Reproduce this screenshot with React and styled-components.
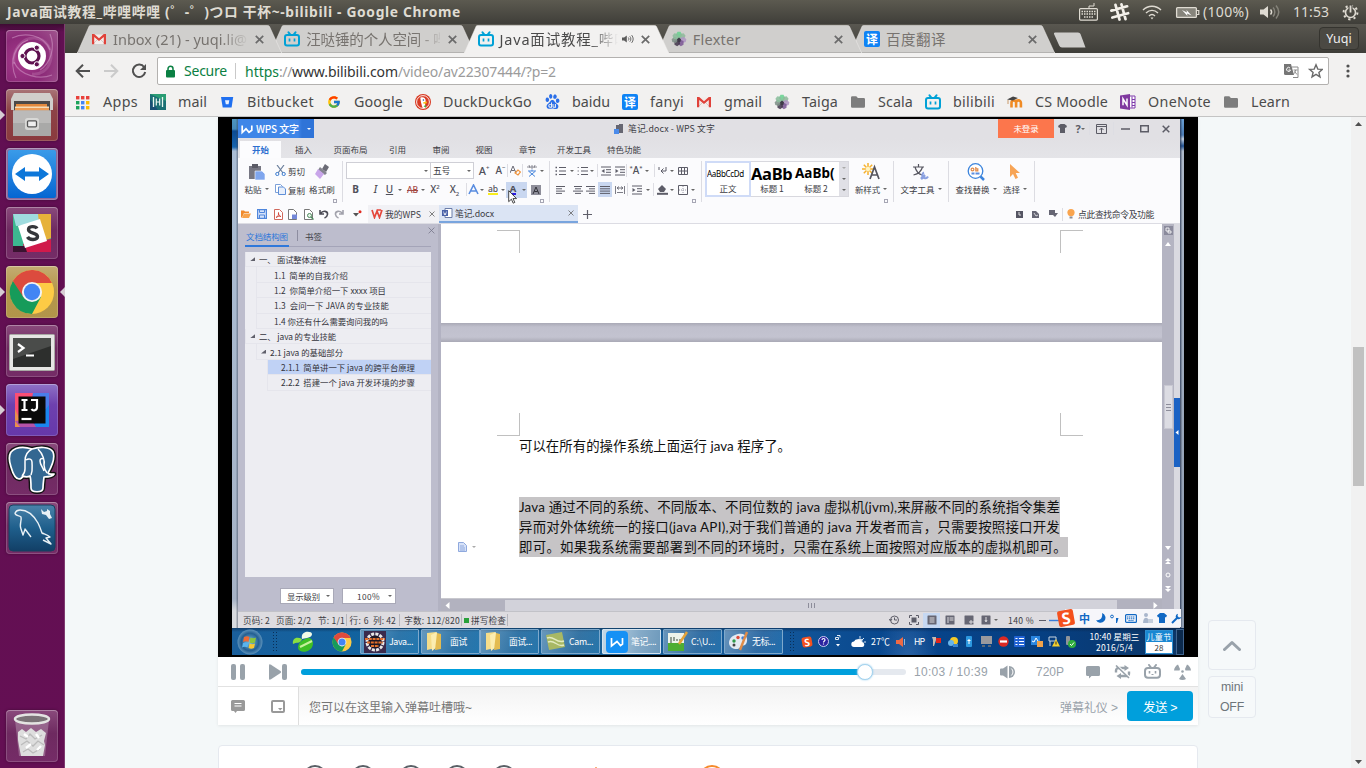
import React, { useLayoutEffect, useRef } from 'react';
import styled, { createGlobalStyle, css } from 'styled-components';
import { FcGoogle } from 'react-icons/fc';
import { SiBaidu } from 'react-icons/si';

const UI = '"Noto Sans", "Noto Sans CJK SC", sans-serif';
const CJK = '"Noto Sans CJK SC", sans-serif';
const WEB = '"Liberation Sans", "Noto Sans CJK SC", sans-serif';

const Global = createGlobalStyle`
  *, *::before, *::after { box-sizing: border-box; }
  body { margin: 0; overflow: hidden; font-family: ${UI}; }
  svg { display: block; flex: none; }
`;

/* ---------- text that keeps a given line width ---------- */
const FitSpan = styled.span`
  display: inline-block;
  flex: none;
  white-space: pre;
`;
function Fit({ w, children }) {
  const ref = useRef(null);
  useLayoutEffect(() => {
    const el = ref.current;
    el.style.letterSpacing = '0px';
    const natural = el.getBoundingClientRect().width;
    el.style.letterSpacing = (w - natural) / Array.from(children).length + 'px';
  }, [w, children]);
  return <FitSpan ref={ref}>{children}</FitSpan>;
}

const Svg = ({ w = 16, h = w, vb = `0 0 ${w} ${h}`, children, ...p }) => (
  <svg width={w} height={h} viewBox={vb} fill="none" {...p}>{children}</svg>
);

/* ---------- desktop shell ---------- */
const Desktop = styled.div`
  width: 1366px; height: 768px; display: flex; flex-direction: column; overflow: hidden; background: #f4f8f9;
`;
const Panel = styled.header`
  height: 24px; flex: none; display: flex; align-items: center; padding: 0 5px 0 7px;
  background: linear-gradient(#5c5a50, #3f3e39); color: #dfdbd2; font-size: 14px; line-height: 24px;
  justify-content: space-between;
`;
const PanelTitle = styled.div` font-weight: 700; font-size: 13.8px; `;
const Indicators = styled.div` display: flex; align-items: center; `;
const Ind = styled.div` width: ${p => p.$w}px; display: flex; justify-content: ${p => p.$start ? 'flex-start' : 'center'}; `;
const Body = styled.div` flex: 1; display: flex; min-height: 0; `;

const Launcher = styled.nav`
  width: 65px; flex: none; display: flex; flex-direction: column; gap: 7px; padding: 6px 0 6px 6px;
  background: linear-gradient(#3e0b33, #610f52 8px, #640f53); border-right: 1px solid #7f3a70;
`;
const Tile = styled.div`
  position: relative; width: 52px; height: 52px; flex: none; border-radius: 4px; display: flex; align-items: center; justify-content: center;
  background: ${p => p.$bg || 'linear-gradient(#8a4a7c, #6e2a60 45%, #752c67)'};
  box-shadow: inset 0 0 0 1px rgba(255,255,255,.17), inset 0 1px 0 rgba(255,255,255,.2), 0 0 3px rgba(0,0,0,.35);
  ${p => p.$last && css`margin-top: auto;`}
`;
const Pip = styled.i`
  position: absolute; top: 21px; width: 0; height: 0; border: 5px solid transparent;
  ${p => p.$right ? css`right: -7px; border-right-color: #d6cdd4; border-left-width: 0;` : css`left: -6px; border-left-color: #d6cdd4; border-right-width: 0;`}
`;

/* ---------- browser chrome ---------- */
const Browser = styled.main` flex: 1; display: flex; flex-direction: column; min-width: 0; `;
const TabStrip = styled.div`
  height: 29px; flex: none; display: flex; padding: 1px 7px 0 12px; background: linear-gradient(#595750, #3f3e39);
`;
const Tab = styled.div`
  position: relative; width: 205px; margin-right: -11.75px; flex: none; z-index: ${p => p.$z};
  display: flex; align-items: center; padding: 0 17px 0 14px; height: 28px;
  font-size: 14.5px; color: ${p => p.$on ? '#4a4a4a' : '#77736f'};
`;
const TabShape = styled.svg` position: absolute; left: 0; top: 0; z-index: -1; `;
const TabTitle = styled.div`
  flex: 1; margin-left: 3px; padding-left: 3px; overflow: hidden; white-space: nowrap; line-height: 26px;
  ${p => p.$fade && css`mask-image: linear-gradient(90deg, #000 ${p.$fade - 25}px, transparent ${p.$fade + 3}px);`}
`;
const CloseSlot = styled.div` width: 12px; display: flex; justify-content: center; flex: none; margin-left: 6px; `;
const NewTab = styled.div` margin: 7px 0 0 10px; `;
const UserBtn = styled.div`
  margin: 2px 0 0 auto; width: 40px; height: 23px; border-radius: 4px; border: 1px solid #35342f;
  background: #4b4943; color: #eee; font-size: 12.5px; line-height: 21px; text-align: center;
`;
const Toolbar = styled.div`
  height: 35px; flex: none; display: flex; align-items: center; background: #f2f1f0; padding: 1px 16px 0 10px;
`;
const NavBtn = styled.div` width: 28px; display: flex; `;
const Omnibox = styled.div`
  margin-left: -2px; margin-right: 17px; flex: 1; height: 28px; background: #fff; border: 1px solid #b3b1af; border-radius: 2px;
  display: flex; align-items: center; font-size: 14px; padding: 0 5px 0 8px; color: #9b9b9b;
`;
const Secure = styled.span` color: #0b8043; margin-left: 9px; padding-right: 8px; border-right: 1px solid #c9c9c9; line-height: 16px; `;
const Url = styled.span` margin-left: 9px; display: flex; flex: 1; `;
const Part = styled.span` color: ${p => p.$c}; `;
const Bookmarks = styled.div`
  height: 29px; flex: none; display: flex; align-items: center; gap: 12px; padding: 0 0 1px 10px; background: #f2f1f0;
  border-bottom: 1px solid #c4c4c4; font-size: 14.3px; color: #4b4b4b;
`;
const Mark = styled.div` display: flex; align-items: center; gap: 12px; height: 28px; line-height: 26px; `;
const MarkIcon = styled.div` width: 16px; height: 16px; display: flex; align-items: center; justify-content: center; `;
const YiBadge = styled.div`
  width: 16px; height: 16px; border-radius: 2px; background: #0f83f5; color: #fff; font: 700 12px/15px ${CJK}; text-align: center;
`;

/* ---------- web page ---------- */
const Viewport = styled.div` flex: 1; display: flex; min-height: 0; background: #f4f8f9; `;
const Page = styled.div` flex: 1; display: flex; padding-left: 153px; min-width: 0; `;
const Column = styled.div` width: 980px; flex: none; `;
const Player = styled.section` background: #fff; box-shadow: 0 1px 3px rgba(0,0,0,.08); `;
const Video = styled.div` height: 540px; background: #000; padding: 2px 14px; display: flex; overflow: hidden; `;
const ScrollTrack = styled.div`
  width: 15px; background: #f1f1f1; flex: none; display: flex; flex-direction: column; align-items: center; padding: 5px 0 4px;
`;
const Thumb = styled.div` width: 11px; height: 139px; background: #c1c1c1; margin: 221px 0 auto; `;
const Side = styled.aside` margin: 503px 0 0 10px; display: flex; flex-direction: column; gap: 6px; font: 12.3px/20px ${WEB}; color: #6d757a; `;
const SideBtn = styled.div`
  width: 48px; height: ${p => p.$h}px; border: 1px solid #e5e9ef; border-radius: 4px; background: #f6f9fa;
  display: flex; flex-direction: column; align-items: center; justify-content: center;
`;
const Controls = styled.div`
  height: 30px; border-bottom: 1px solid #e2e2e2; display: flex; align-items: center; padding-left: 12px; color: #99a2aa; font: 12px ${WEB};
`;
const CtlSlot = styled.div` width: ${p => p.$w}px; display: flex; flex: none; `;
const Bar = styled.div` width: 605px; height: 6px; border-radius: 3px; background: #e5e9ef; display: flex; align-items: center; flex: none; margin-right: 8px; `;
const Played = styled.div` width: 564px; height: 6px; background: #009fdc; border-radius: 3px 0 0 3px; `;
const Knob = styled.div` width: 16px; height: 16px; border-radius: 50%; background: #fff; border: 1px solid #a5d3ee; box-shadow: 0 0 2px #8cc8ec; margin-left: -8px; `;
const SendRow = styled.div` height: 38px; display: flex; font: 12px ${WEB}; `;
const SendTools = styled.div` width: 81px; border-right: 1px solid #dedede; display: flex; align-items: center; gap: 26px; padding-left: 13px; `;
const SendInput = styled.div`
  flex: 1; display: flex; align-items: center; padding: 0 5px 0 10px; background: linear-gradient(#f3f3f3, #fff); color: #757575;
`;
const Etiquette = styled.span` margin-left: auto; color: #99a2aa; `;
const Send = styled.div` margin-left: 9px; width: 66px; height: 30px; border-radius: 4px; background: #009fdc; color: #fff; display: flex; align-items: center; justify-content: center; font-size: 12.5px; `;
const Card = styled.section`
  margin-top: 20px; height: 60px; border: 1px solid #e5e9ef; border-radius: 4px; background: #fff; padding: 19px 0 0 84px; display: flex;
`;
const Ring = styled.i`
  width: ${p => p.$d}px; height: ${p => p.$d}px; border-radius: 50%; border: 2px solid ${p => p.$c}; margin-right: ${p => p.$mr}px; flex: none;
`;
const Spark = styled.i` width: 2px; height: 4px; background: #f7b27a; margin: 2px 102px 0 79px; flex: none; `;

/* ---------- recorded desktop inside the video ---------- */
const Screen = styled.div` width: 952px; height: 536px; display: flex; flex-direction: column; font-family: ${CJK}; color: #3c3c44; font-size: 8.5px; overflow: hidden; `;
const Upper = styled.div` height: 509px; display: flex; `;
const DeskLeft = styled.div` width: 6px; background: linear-gradient(90deg, transparent 60%, rgba(60,70,90,.55)), linear-gradient(#4e95bd, #4489b8 10px, #0b4a92 12px, #1764ae 28px, #aabdd4 32px, #a7b3c6 480px, #d8dade 492px); `;
const DeskRight = styled.div` width: 4px; background: linear-gradient(90deg, rgba(30,45,75,.8), transparent 60%), linear-gradient(#6aa0d5, #4d7cb4 16px, #c0cede 20px, #205090 27px, #aeb9c9 32px, #8d9bb0); `;
const Wps = styled.div` width: 942px; display: flex; flex-direction: column; background: #fbfbfd; `;
const TitleBar = styled.div` height: 19px; background: #e1e0e4; display: flex; align-items: center; `;
const Brand = styled.div`
  width: 76px; height: 19px; background: linear-gradient(90deg, #3f86e8 60px, #2f74d8 64px); color: #fff; display: flex; align-items: center; padding-left: 3px; gap: 3px; font-size: 10px; font-weight: 500; flex: none;
`;
const Caret = styled.i`
  width: 0; height: 0; border: 2px solid transparent; border-top: 2.5px solid ${p => p.$c || '#666'}; border-bottom: 0; flex: none; margin: 0 ${p => p.$m ?? 0}px;
`;
const DocName = styled.div` margin-left: 300px; width: 384px; display: flex; align-items: center; gap: 4px; font-size: 8.8px; flex: none; `;
const Login = styled.div` width: 56px; height: 19px; background: #fc764c; color: #fff; text-align: center; line-height: 19px; font-size: 8.5px; flex: none; `;
const WinCtl = styled.div` width: ${p => p.$w}px; display: flex; justify-content: center; align-items: center; color: #5c5c66; font: 700 11px/16px ${UI}; `;
const MenuBar = styled.div` height: 20px; background: linear-gradient(#e1e0e4, #e4e4e8); display: flex; align-items: flex-end; padding-left: 2px; `;
const Menu = styled.div`
  width: ${p => p.$w}px; height: 17px; line-height: 17px; text-align: center; font-size: 8.5px;
  ${p => p.$on && css`background: #fcfcfe; color: #2d6fd0; font-weight: 700;`}
`;
const Ribbon = styled.div` height: 47px; display: flex; background: #fbfbfd; padding: 3px 0 0 2px; `;
const Group = styled.div` position: relative; width: ${p => p.$w}px; height: 41px; border-right: 1px solid #dcdce2; display: flex; flex-direction: column; flex: none; ${p => p.$row && css`flex-direction: row;`} `;
const Corner = styled.i` position: absolute; right: 5px; bottom: -1px; width: 4px; height: 4px; border: 1px solid #a6a6b4; `;
const Line = styled.div` height: 19px; display: flex; align-items: center; flex: none; `;
const Cell = styled.div`
  width: ${p => p.$w}px; height: ${p => p.$h || 16}px; display: flex; align-items: center; justify-content: center; flex: none; white-space: nowrap;
  color: #55555f; font-size: 9px; ${p => p.$hl && css`background: #c9d7f0;`}
`;
const Div = styled.i` width: 1px; height: 13px; background: #dddde3; flex: none; `;
const Combo = styled.div` width: ${p => p.$w}px; height: 17px; border: 1px solid #cfcfd6; margin-left: ${p => p.$ml || 0}px; background: #fff; display: flex; align-items: center; justify-content: space-between; padding: 0 2px 0 2px; font-size: 8.8px; flex: none; `;
const Big = styled.div` width: ${p => p.$w}px; display: flex; flex-direction: column; align-items: center; flex: none; `;
const BigIcon = styled.div` height: 19px; display: flex; align-items: center; margin-top: 1px; `;
const BigLabel = styled.div` height: 16px; line-height: 14px; display: flex; align-items: center; gap: 3px; white-space: nowrap; font-size: 8.5px; `;
const Glyph = styled.span`
  font-family: "Noto Sans", sans-serif; font-size: ${p => p.$s || 10}px; font-weight: ${p => p.$b ? 700 : 500}; font-style: ${p => p.$i ? 'italic' : 'normal'};
  color: ${p => p.$c || '#50505a'}; text-decoration: ${p => p.$d || 'none'}; line-height: 11px;
  ${p => p.$bar && css`border-bottom: 2px solid ${p.$bar}; line-height: 9px;`}
  sup, sub { font-size: 6px; line-height: 0; }
`;
const Styles = styled.div` display: flex; height: 36px; margin: 0 0 0 3px; border: 1px solid #d8d8de; background: #fff; width: 144px; flex: none; `;
const StyleCell = styled.div`
  width: 44px; height: 34px; overflow: hidden; text-align: center; font-size: 8.5px; line-height: 12px; padding-top: 2px; ${p => p.$on && css`outline: 2px solid #cfdbf7; outline-offset: -1px;`}
`;
const Sample = styled.div` font: ${p => p.$b ? 700 : 400} ${p => p.$s}px/19px "Noto Sans", sans-serif; height: 18px; color: #000; white-space: nowrap; overflow: hidden; padding-left: 1px; text-align: left; letter-spacing: ${p => p.$ls || 0}px; `;
const StyleScroll = styled.div` width: 9px; background: #e0e0e6; display: flex; flex-direction: column; justify-content: space-around; align-items: center; margin-left: auto; `;
const DocTabs = styled.div` height: 19px; display: flex; align-items: center; background: #fbfbfd; border-bottom: 1px solid #dcdce3; font-size: 8.8px; `;
const Quick = styled.div` width: ${p => p.$w}px; display: flex; justify-content: center; flex: none; `;
const DocTab = styled.div`
  width: ${p => p.$w}px; height: 18px; display: flex; align-items: center; gap: 2px; padding: 0 4px 0 3px; background: ${p => p.$on ? '#dbe4f4' : '#f1f1f5'};
  border-bottom: ${p => p.$on ? '2px solid #79a5de' : '0'}; flex: none;
`;
const Push = styled.span` margin-left: auto; display: flex; align-items: center; `;
const Work = styled.div` height: 387px; display: flex; `;
const Outline = styled.div` width: 203px; background: #bdbdcd; padding: 0 7px 0 7px; flex: none; border-right: 3px solid #b2b2c2; `;
const OutlineHead = styled.div` height: 22px; display: flex; align-items: center; margin-top: 1px; border-bottom: 1px solid #a4a4b8; margin-bottom: 5px; font-size: 8.5px; `;
const HeadTab = styled.div`
  height: 22px; line-height: 22px; padding-left: 1px; ${p => p.$on ? css`color: #2f78da; border-bottom: 2px solid #2f78da; width: 44px; margin-right: 8px;` : css`padding-left: 7px;`}
`;
const HeadSep = styled.i` width: 1px; height: 11px; background: #8d8da0; `;
const HeadClose = styled.div` margin: -10px -4px 0 auto; `;
const Tree = styled.div` height: 325px; background: #ededf2; `;
const TreeRow = styled.div`
  height: 15.4px; margin-left: ${p => p.$ml}px; padding-left: ${p => p.$pl}px; display: flex; align-items: center; border-bottom: 1px solid #e5e5ec; border-left: 1px solid #e5e5ec;
  background: ${p => p.$on ? '#c0d2f5' : 'transparent'}; font-family: "Noto Sans CJK SC", sans-serif; font-size: 8.4px; color: #34343c;
`;
const Twist = styled.i` width: 5px; height: 4px; background: #5f5f6a; clip-path: polygon(100% 0, 100% 100%, 0 100%); margin-right: ${p => p.$mr}px; `;
const OutlineFoot = styled.div` display: flex; gap: 8px; padding: 11px 0 0 35px; `;
const Select = styled.div` width: 54px; height: 16px; background: #fff; border: 1px solid #a9a9b8; display: flex; align-items: center; justify-content: space-between; padding: 0 3px 0 6px; font-size: 8.3px; line-height: 13px; `;
const Doc = styled.div` width: 721px; display: flex; flex-direction: column; flex: none; `;
const Sheet = styled.div` height: ${p => p.$h}px; background: #fff; padding: ${p => p.$pt}px 79px 0 56px; `;
const Gap = styled.div` height: 19px; background: linear-gradient(#a9a9b6, #c0c0cd 4px, #c3c3d0 14px, #a9a9b5); `;
const Marks = styled.div` display: flex; justify-content: space-between; `;
const Crop = styled.i`
  width: 23px; height: 23px; border: 0 solid #c0c0c0; ${p => css`border-${p.$v}-width: 1px; border-${p.$h}-width: 1px;`}
`;
const Prose = styled.div` margin-left: 22px; font-family: Lato, "Noto Sans CJK SC", sans-serif; font-size: 13.4px; color: #111; `;
const ProseLine = styled.div`
  position: relative; height: 20.2px; line-height: 20px; width: ${p => p.$w}px; white-space: nowrap; ${p => p.$sel && css`background: #c6c4c6;`}
`;
const PasteHint = styled.div` position: absolute; left: -61px; top: 5px; display: flex; align-items: center; gap: 5px; `;
const HScroll = styled.div` height: 13px; border-top: 1px solid #c8c8ce; background: #b2b2bf; display: flex; align-items: center; justify-content: space-between; padding: 0 4px 0 4px; `;
const HThumb = styled.div` width: 612px; height: 11px; background: #d2d2da; margin-left: 55px; margin-right: auto; display: flex; justify-content: center; align-items: center; gap: 1px; i { width: 1px; height: 5px; background: #8d8d9a; margin: 0 .5px; } `;
const VScroll = styled.div` width: 12px; background: #b4b4c2; display: flex; flex-direction: column; align-items: center; padding: 2px 0 19px; flex: none; `;
const VThumb = styled.div` width: 9px; height: 44px; background: #dcdce3; border: 1px solid #c8c8d2; margin-top: 136px; display: flex; flex-direction: column; align-items: center; justify-content: center; gap: 2px; i { width: 5px; height: 1px; background: #8d8d9a; } `;
const VEnd = styled.div` margin-top: auto; display: flex; flex-direction: column; gap: 8px; align-items: center; `;
const Edge = styled.div` width: 6px; background: #d9d9e0; padding-top: 174px; flex: none; `;
const EdgeTab = styled.div` height: 69px; background: #1b62c4; display: flex; align-items: center; justify-content: center; `;
const Status = styled.div` position: relative; height: 17px; background: #dedce0; display: flex; align-items: center; font-size: 8.6px; padding-left: 5px; border-top: 1px solid #c2c2c8; `;
const Stat = styled.div` width: ${p => p.$w}px; flex: none; display: flex; align-items: center; ${p => p.$sep && css`border-right: 1px solid #b6b6bc;`} ${p => p.$c && css`justify-content: center;`} ${p => p.$hl && css`background: #c6d8f2; height: 15px;`} `;
const Ime = styled.div` position: absolute; right: -1px; top: -3px; width: 116px; height: 18px; background: #f6f6fa; display: flex; align-items: center; `;
const ImeSlot = styled.div` width: ${p => p.$w}px; color: #1168c4; font: 700 11px/14px ${CJK}; display: flex; justify-content: center; flex: none; `;
const SogouTile = styled.div` width: ${p => p.$s}px; height: ${p => p.$s}px; border-radius: 2px; background: #f4511e; color: #fff; font: 700 ${p => p.$s}px/${p => p.$s}px "Noto Sans", sans-serif; text-align: center; transform: rotate(-10deg); margin-left: ${p => p.$ml || 0}px; flex: none; `;
const Taskbar = styled.div`
  height: 27px; display: flex; align-items: center; color: #fff; font-size: 8.8px;
  background: linear-gradient(rgba(10,30,60,.5), rgba(10,30,60,0) 4px), radial-gradient(ellipse 30px 60px at 676px 34px, rgba(150,190,240,.25), transparent), linear-gradient(90deg, #1a5f9c, #10639f 15%, #1a6096 40%, #125699 58%, #07458c 70%, #063f82 85%, #0c3666);
`;
const Slot = styled.div` width: ${p => p.$w}px; display: flex; justify-content: center; flex: none; ${p => p.$start && css`justify-content: flex-start;`} `;
const Grip = styled.i` width: 6px; height: 22px; background: radial-gradient(circle, #0a2f57 0.8px, transparent 1px) 0 0/3px 3px; margin: 0 auto; `;
const Task = styled.div`
  width: 59px; height: 25px; margin-right: ${p => p.$mr ?? 2}px; flex: none; border: 1px solid ${p => p.$on ? '#d5e4f0' : '#7ea9cc'}; border-radius: 1px; display: flex; align-items: center; gap: 3px; padding-left: 3px;
  background: ${p => p.$on ? 'linear-gradient(100deg, #c3d8e6, #86abc8 60%, #6d99bb)' : 'linear-gradient(110deg, rgba(255,255,255,.35), rgba(255,255,255,.12) 60%, rgba(80,180,230,.25))'};
`;
const Clock = styled.div` width: 61px; display: flex; flex-direction: column; align-items: center; line-height: 11px; font-size: 8.5px; flex: none; `;
const Calendar = styled.div` width: 28px; height: 24px; background: #1887d2; display: flex; flex-direction: column; align-items: center; justify-content: space-between; line-height: 11px; font-size: 8px; border: 1px solid #2e90d2; flex: none; `;
const CalDay = styled.div` background: #fff; color: #333; width: 26px; line-height: 11px; height: 11px; text-align: center; `;
const ShowDesk = styled.div` width: 8px; height: 26px; border: 1px solid #40648e; margin-left: auto; background: #0c2a4d; `;
const PointerWrap = styled.div` position: absolute; left: 165px; top: 29px; z-index: 3; `;

/* ---------- icons ---------- */
const X = ({ s = 8, c = '#6b6b6b', t = 1.5 }) => <Svg w={s} vb="0 0 8 8"><path d="M.7.7l6.6 6.6M7.3.7L.7 7.3" stroke={c} strokeWidth={t} /></Svg>;
const BiliIcon = () => (
  <Svg w={16}><path d="M4.5 1.3l1.600 2M11.500 1.300l-1.600 2" stroke="#00a1d6" strokeWidth="2" strokeLinecap="round" /><rect x="1" y="4" width="14" height="10.500" rx="2" stroke="#00a1d6" strokeWidth="2" /><path d="M5.500 7.500v3M10.500 7.500v3" stroke="#00a1d6" strokeWidth="1.700" /></Svg>
);
const Gmail = () => (
  <Svg w={16}><path d="M2 3.500h12v9.500H2z" fill="#f3ecea" /><path d="M2 13l5-5M14 13L9 8" stroke="#d3c9c6" /><path d="M1 3h2.200L8 7.200 12.800 3H15v10.300h-2.200V6L8 10 3.200 6v7.300H1z" fill="#e0423a" /></Svg>
);
const Flower = () => (
  <Svg w={16}>
    {[['#69d391', 0], ['#8fb99b', 51], ['#b097c4', 103], ['#7d5a96', 154], ['#453a4f', 206], ['#7e9188', 257], ['#8bbd9c', 309]].map(([c, a]) => (
      <path key={a} d="M8 8.6L4.8 4 6.5.8h3L11.2 4z" fill={c} opacity=".88" transform={`rotate(${a} 8 8)`} />
    ))}
    <path d="M8 6.500l2 1.800L9.300 11H6.700L6 8.300z" fill="#3f3a48" />
  </Svg>
);
const Folder = () => <Svg w={16}><path d="M1 3.500A1.300 1.300 0 012.300 2.200h4l1.600 1.700h5.800A1.300 1.300 0 0115 5.200v7.300a1.300 1.300 0 01-1.300 1.300H2.300A1.300 1.300 0 011 12.500z" fill="#7d7d7d" /></Svg>;
const AppsIcon = () => (
  <Svg w={16}>{['#e8403a', '#e8403a', '#e8403a', '#1da35a', '#4285f4', '#fbbc05', '#1da35a', '#4285f4', '#fbbc05'].map((c, i) => <rect key={i} x={1 + (i % 3) * 5} y={2 + Math.floor(i / 3) * 5} width="3.4" height="3.4" fill={c} />)}</Svg>
);
const MailIcon = () => <Svg w={16}><rect width="16" height="16" fill="#1a6f74" /><path d="M0 0h16v7z" fill="#2a9d74" /><path d="M0 16V5l8 11z" fill="#174f73" /><path d="M3.500 3v10M12.500 3v10" stroke="#e8f6ef" strokeWidth="1.300" /><path d="M6.300 4.500v7M9.700 4.500v7M6.300 8h3.400" stroke="#e8f6ef" strokeWidth="1.200" /></Svg>;
const Bitbucket = () => <Svg w={16}><path d="M2 3h12.200l-1.600 10.500H3.700z" fill="#2070f0" /><path d="M6 6.300h4.300l-.7 4H6.800z" fill="#e9f1ff" /></Svg>;
const Duck = () => <Svg w={16}><circle cx="8" cy="8" r="8" fill="#d83a23" /><circle cx="8" cy="8" r="6.400" stroke="#fff" strokeWidth=".9" /><path d="M5.300 3.800c3-1.400 5.500.3 5.400 3.400L10 9.500l.8 4.300-3 .5C6.500 11 5.600 7 5.300 3.800z" fill="#fff" /><path d="M8.200 8.200l4-.6-.8 1.800-3 .3z" fill="#fbc413" /><circle cx="8.400" cy="6" r=".8" fill="#28508a" /><path d="M8.500 12.200l2.500-1.500v3z" fill="#49a942" /></Svg>;
const Moodle = () => <Svg w={17} h={16}><path d="M4.500 13.500V8.800a2.200 2.200 0 014.600 0v4.700M9.100 8.800a2.200 2.200 0 014.800 0v4.700" stroke="#f08b24" strokeWidth="2.600" /><path d="M0 5.500l6-3 5 1.500-5 2.600z" fill="#444" /><path d="M1 6v4" stroke="#c99a6a" /></Svg>;
const OneNote = () => <Svg w={16}><path d="M9 2h6v12H9z" fill="#fff" stroke="#7e3aab" /><path d="M12 2.500v11M12 5.500h3M12 8.500h3M12 11.500h3" stroke="#7e3aab" /><path d="M0 1.600L10 0v16L0 14.400z" fill="#80399f" /><path d="M3 11.300V4.800l4 6.300V4.600" stroke="#fff" strokeWidth="1.500" /></Svg>;

const Dash = () => <Svg w={52}><path d="M6 8C18 2 38 4 44 20M46 45C34 50 14 46 8 32M10 48C2 30 10 14 22 10M44 4c6 14 0 30-10 36" stroke="#e0b0d6" strokeWidth="1.200" opacity=".45" /><path d="M8 34C6 20 16 8 28 8c12 0 20 12 16 24-2 8-10 13-18 12" stroke="#d9a0cd" strokeWidth="3" opacity=".25" /><circle cx="26" cy="26" r="14" fill="#fff" /><circle cx="26" cy="26" r="7" stroke="#5f1150" strokeWidth="3.200" /><g fill="#5f1150" stroke="#fff" strokeWidth="1"><circle cx="16.500" cy="26" r="2.600" /><circle cx="30.800" cy="17.700" r="2.600" /><circle cx="30.800" cy="34.300" r="2.600" /></g></Svg>;
const Files = () => <Svg w={52}><path d="M8 4h36l3 6v11H5V10z" fill="#d0cecb" /><path d="M8 12h36v11H8z" fill="#4d4a48" /><path d="M10 15h31v8H10z" fill="#e38a3e" /><path d="M9 17.500h34v6H9z" fill="#f6ddb8" /><path d="M9 19h34v5H9z" fill="#ee9c54" /><path d="M7 21.500h38V47H7z" fill="#a9a9a8" /><path d="M7 21.500h38V34H7z" fill="#bbbab9" /><rect x="19" y="29" width="14" height="12" rx="2.500" fill="#d8d8d6" /><rect x="21.500" y="31.800" width="9" height="6" rx="1" fill="#eee" stroke="#555" strokeWidth="1.300" /></Svg>;
const Team = () => <Svg w={52}><defs><linearGradient id="tv" x2="0" y2="1"><stop stopColor="#3a9be9" /><stop offset="1" stopColor="#0566d2" /></linearGradient></defs><rect x="2" y="2" width="48" height="48" rx="2" fill="url(#tv)" /><circle cx="26" cy="26" r="20" fill="#fff" /><path d="M9 26l10-7v4.500h14V19l10 7-10 7v-4.500H19V33z" fill="#0d77d9" /></Svg>;
const Slack = () => <Svg w={52}><g transform="translate(7 7)"><rect width="38" height="38" rx="2" fill="#3db890" /><path d="M0 0h30l-4 10L3 12z" fill="#9fdcdf" /><path d="M25 0h13v24l-10 4z" fill="#e6b23a" /><path d="M38 25v13H12l-2-8z" fill="#d01a4b" /><path d="M0 32l12 0 2 6H0z" fill="#3a1330" /><path d="M5 12l22-7 7 22-22 7z" fill="#fff" /><path d="M24 14.500c-1.500-2.700-8.500-2.700-8.500 1 0 4.400 9 2.800 9 7 0 3.700-8 4-10 .4" stroke="#35373b" strokeWidth="3.400" /></g></Svg>;
const ChromeIcon = ({ s }) => <Svg w={s} vb="0 0 48 48"><circle cx="24" cy="24" r="23" fill="#fdcb45" /><path d="M4 12.500A23 23 0 0024 47L33.500 29 24 24H15z" fill="#169b5a" /><path d="M4 12.500L15.500 30 24 14.500h20.800A23 23 0 004 12.500z" fill="#dc4b3e" /><circle cx="24" cy="24" r="10.500" fill="#f3f3f3" /><circle cx="24" cy="24" r="8.500" fill="#4285f4" /></Svg>;
const Term = () => <Svg w={52}><rect x="3.500" y="9.500" width="45" height="36" rx="1" fill="#e6e6e4" stroke="#a9a9a5" /><rect x="7" y="13" width="38" height="29" fill="#2d2f2d" /><path d="M7 13h38v8L7 34z" fill="#4a4c4a" /><path d="M12 19l5.500 4-5.500 4" stroke="#fff" strokeWidth="2.200" /><path d="M20 30.500h8" stroke="#fff" strokeWidth="2" /></Svg>;
const Idea = () => <Svg w={52}><path d="M9 9h18l-3 20L9 34z" fill="#fc4e75" /><path d="M27 9h16v16l-18 2z" fill="#4a7de8" /><path d="M43 21v22H26z" fill="#1a86ef" /><path d="M9 25l8 18H9z" fill="#e8904c" /><path d="M9 37l16-2 5 8H14z" fill="#b553a8" /><rect x="12.500" y="12.500" width="27" height="27" fill="#0a0a0a" /><path d="M15.500 16h6M18.500 16v10M15.500 26h6M25 16h6v7.500a3 3 0 01-5.500 1.500" stroke="#fff" strokeWidth="2.200" /><path d="M15.500 35h10" stroke="#fff" strokeWidth="2.200" /></Svg>;
const Pg = () => <Svg w={52}><g strokeLinejoin="round"><path d="M26 6c-6-2-12-2-16-.5C3 8 2 15 5 24c2 7 5 12 8 12 2 0 3-1 4-3 2 1 5 1 7 0 1 3 1 8 1 12 0 5 12 5 12 0 0-3 .5-7 1-11 5 0 9-1 10-3-2 0-5 1-6-1 4-7 7-16 5-21C44 3 32 4 26 6z" fill="#336791" stroke="#111" strokeWidth="4.500" /><path d="M26 6c-6-2-12-2-16-.5C3 8 2 15 5 24c2 7 5 12 8 12 2 0 3-1 4-3 2 1 5 1 7 0 1 3 1 8 1 12 0 5 12 5 12 0 0-3 .5-7 1-11 5 0 9-1 10-3-2 0-5 1-6-1 4-7 7-16 5-21C44 3 32 4 26 6z" fill="#336791" stroke="#fff" strokeWidth="1.700" /><path d="M26 6c-6 3-7 8-7 12v8c0 3-1 5-3 7M32 6c5 5 7 12 6 16 0 3 1 5 3 8M20 17c3-2 6-1 6 2 0 5 1 8-1 13M38 16c-3-1-4 0-4 2 0 4 3 6 4 10" stroke="#fff" strokeWidth="1.500" /></g></Svg>;
const Dolphin = () => <Svg w={52}><defs><linearGradient id="wb" x2="0" y2="1"><stop stopColor="#4a83aa" /><stop offset=".5" stopColor="#1f5f8c" /><stop offset="1" stopColor="#123f66" /></linearGradient></defs><rect x="3" y="3" width="46" height="46" rx="4" fill="url(#wb)" stroke="#17405f" /><path d="M9 11c1-2 3-3 5-3 8 0 14 6 18 13 2 4 3 7 4 10 2 1 6 2 8 4l-4 1 5 6-8-4M9 11c0 3 4 2 6 4 1 3-2 8 0 12 1 3 2 6 2 6 1-3 2-5 2-6l6 8" stroke="#e9f1f6" strokeWidth="1.400" strokeLinejoin="round" /><path d="M35 7l3 3 3-1 0-2 3 2 0 3 2 4-3 1-3-4-4-1z" fill="#e9f1f6" /></Svg>;
const Trash = () => <Svg w={52}><path d="M9 10h34l-4 36H13z" fill="#b18daa" opacity=".55" /><path d="M12 22l4-3 4 3 5-4 5 4 5-3 5 4-2 8 1 4-2 11H15l-2-10-1-6z" fill="#dedede" /><path d="M14 26l6 3 4-5 5 5 7-4M15 35l6-4 6 5 5-5 6 4M17 42l5-3 5 4 7-4" stroke="#bbb" strokeWidth="1.300" /><path d="M18 24l4 3M30 24l3 4M20 38l5-4M31 40l4-4" stroke="#fff" strokeWidth="2.400" /><ellipse cx="26" cy="9" rx="17" ry="4.500" fill="#7b7377" stroke="#e4e4e2" strokeWidth="2.500" /></Svg>;

const Speaker = ({ w = 18, c = '#dfdbd2', dim = '#85837a' }) => <Svg w={w} vb="0 0 20 16"><path d="M0 5.500h3.500L8 2v12l-4.500-3.500H0z" fill={c} /><path d="M10.500 5.500c1.300 1.500 1.300 3.500 0 5" stroke={c} strokeWidth="1.500" /><path d="M13 3.500c2.400 2.500 2.400 6.500 0 9M16 1.500c3.400 4 3.400 9 0 13" stroke={dim} strokeWidth="1.500" /></Svg>;
const WLogo = ({ w = 12, c = '#fff' }) => <Svg w={w} vb="0 0 12 12"><path d="M1.200 2.500v7L5 5.800l3 3.500 2.800-2V2.500" stroke={c} strokeWidth="1.700" /></Svg>;
const Bars = ({ rows, w = 10 }) => <Svg w={w} h={10}>{rows.map(([x, l], i) => <path key={i} d={`M${x} ${1.5 + i * 2.3}h${l}`} stroke="#5d5d68" strokeWidth="1" />)}</Svg>;
const Numbered = ({ dots }) => <Svg w={11} h={10}><path d="M4 1.500h7M4 5h7M4 8.500h7" stroke="#5d5d68" /><path d="M.5 1.500H2M.5 5H2M.5 8.500H2" stroke={dots ? '#5d5d68' : '#8b8b95'} strokeWidth={dots ? 1.5 : 1} /></Svg>;
const Indent = ({ out }) => <Svg w={10} h={10}><path d="M0 1h10M5 3.700h5M5 6.300h5M0 9h10" stroke="#5d5d68" /><path d={out ? 'M3.500 3L.5 5l3 2z' : 'M.5 3l3 2-3 2z'} fill="#5d5d68" /></Svg>;
const Sheet4 = ({ c = '#666673', d }) => <Svg w={10}><rect x=".5" y=".5" width="9" height="9" fill={c} rx=".5" /><path d={d || 'M2.500 3h5M2.500 5h5M2.500 7h5'} stroke="#dedce0" /></Svg>;
const FileGlyph = ({ c, a = '#777' }) => <Svg w={11} h={11}><path d="M1.500.5h5l3 3v7h-8z" fill="#fff" stroke={a} /><path d="M5 5.500h5V10H5z" fill={c} /></Svg>;
const Win = () => <Svg w={26}><defs><radialGradient id="orb"><stop stopColor="#7cc5e8" /><stop offset=".7" stopColor="#245f92" /><stop offset="1" stopColor="#5c92bb" /></radialGradient></defs><circle cx="13" cy="13" r="12.500" fill="url(#orb)" /><path d="M7 8c2-1 4-1 5.500 0l-1 5c-2-1-3.500-1-5.500 0z" fill="#ef6a35" /><path d="M13.500 8.500c2 1 3.500 1 5.500 0l-1 5c-2 1-3.500 1-5.500 0z" fill="#8cc53c" /><path d="M6 14c2-1 3.500-1 5.500 0l-1 4.500c-2-1-3.500-1-5.500 0z" fill="#5ab4ee" /><path d="M12.500 14.500c2 1 3.500 1 5.500 0l-1 4.500c-2 1-3.500 1-5.500 0z" fill="#fbc831" /></Svg>;
const YellowFolder = () => <Svg w={18} h={21}><path d="M2 2l9-1v16l-9 2z" fill="#f5dd8a" /><path d="M6 4l6-3v15l-5 4z" fill="#fbedb0" /><path d="M12 2l4 1v15l-6 1z" fill="#e3bb50" /></Svg>;

const launcher = [
  { el: <Dash />, bg: 'radial-gradient(circle at 30% 60%, #a63a8c, #8c2a78 50%, #a0568f)' },
  { el: <Files />, bg: 'linear-gradient(#a97578, #8d4347 40%, #8a3a3e)', left: true },
  { el: <Team />, bg: '#8d6a9c' },
  { el: <Slack /> },
  { el: <ChromeIcon s={46} />, bg: 'linear-gradient(#c4ac72, #b4974c 45%, #b2954a)', left: true, right: true },
  { el: <Term /> },
  { el: <Idea />, bg: 'linear-gradient(#8f72c6, #6e40ae 40%, #6638aa)', left: true },
  { el: <Pg /> },
  { el: <Dolphin /> },
];
const bookmarks = [
  ['Apps', 35, <AppsIcon />], ['mail', 29, <MailIcon />], ['Bitbucket', 67, <Bitbucket />], ['Google', 49, <FcGoogle size={14} />],
  ['DuckDuckGo', 89, <Duck />], ['baidu', 38, <SiBaidu size={15} color="#2b6fe8" />], ['fanyi', 34, <YiBadge>译</YiBadge>],
  ['gmail', 38, <Gmail />], ['Taiga', 36, <Flower />], ['Scala', 35, <Folder />], ['bilibili', 42, <BiliIcon />],
  ['CS Moodle', 73, <Moodle />], ['OneNote', 63, <OneNote />], ['Learn', 39, <Folder />],
];
const tabs = [
  { t: 'Inbox (21) - yuqi.li@', w: 134, fade: 136, icon: <Gmail /> },
  { t: '汪哒锤的个人空间 - 哔', w: 141, fade: 138, icon: <BiliIcon /> },
  { t: 'Java面试教程_哔哩', w: 130, fade: 118, icon: <BiliIcon />, on: true },
  { t: 'Flexter', w: 48, icon: <Flower /> },
  { t: '百度翻译', w: 60, icon: <YiBadge>译</YiBadge> },
];
const menus = [['开始', 41], ['插入', 45], ['页面布局', 49], ['引用', 45], ['审阅', 42], ['视图', 44], ['章节', 43], ['开发工具', 50], ['特色功能', 50]];
const tree = [
  [0, 4, '一、 面试整体流程', 67, 4], [11, 17, '1.1  简单的自我介绍', 74], [11, 17, '1.2  你简单介绍一下 xxxx 项目', 112],
  [11, 17, '1.3  会问一下 JAVA 的专业技能', 115], [11, 17, '1.4 你还有什么需要询问我的吗', 114], [0, 4, '二、 java 的专业技能', 77, 4],
  [11, 4, '2.1 java 的基础部分', 73, 4], [22, 13, '2.1.1  简单讲一下 java 的跨平台原理', 134, 0, true], [22, 13, '2.2.2  搭建一个 java 开发环境的步骤', 134],
];

function TopPanel() {
  return (
    <Panel>
      <PanelTitle><Fit w={454}>Java面试教程_哔哩哔哩 (゜-゜)つロ 干杯~-bilibili - Google Chrome</Fit></PanelTitle>
      <Indicators>
        <Ind $w={46}><Svg w={19} h={18}><path d="M10 5V3h5V0" stroke="#dfdbd2" /><rect x=".6" y="5.600" width="17.800" height="11.500" rx="1" stroke="#dfdbd2" strokeWidth="1.200" /><path d="M2.500 8.500h14M2.500 11h14M5 14h9" stroke="#dfdbd2" strokeWidth="1.500" strokeDasharray="1.500 1" /></Svg></Ind>
        <Ind $w={18}><Svg w={20} vb="0 0 20 20"><path d="M6.500 2.500l3 15M12.500 2.500l3 15M2 8l16-3.200M2.500 15l16-3.200" stroke="#f3f0ea" strokeWidth="2.700" strokeLinecap="round" transform="rotate(-4 10 10) translate(-.5 0)" /></Svg></Ind>
        <Ind $w={46}><Svg w={20} h={15}><path d="M1 5c5-5 13-5 18 0M4 8c3.500-3.500 8.500-3.500 12 0M7 11c2-2 4-2 6 0" stroke="#dfdbd2" strokeWidth="1.400" /><path d="M8.500 12.500h3L10 14.500z" fill="#dfdbd2" /></Svg></Ind>
        <Ind $w={28} $start><Svg w={25} h={13}><rect x="1.600" y="1.600" width="19.800" height="9.800" rx="1" fill="#86847b" stroke="#dfdbd2" strokeWidth="1.300" /><path d="M22 4.500h1.800v4H22" stroke="#dfdbd2" strokeWidth="1.200" /><path d="M7 4l5 2.500L11.500 4l5 5.500-4.500-2 .5 2.500z" fill="#fff" /></Svg></Ind>
        <Ind $w={44} $start><Fit w={46}>(100%)</Fit></Ind>
        <Ind $w={46}><Speaker w={20} /></Ind>
        <Ind $w={47} $start><Fit w={36}>11:53</Fit></Ind>
        <Ind $w={21}><Svg w={17} vb="0 0 17 17"><circle cx="8.500" cy="8.500" r="5" stroke="#dfdbd2" strokeWidth="1.600" /><circle cx="8.500" cy="8.500" r="6.900" stroke="#dfdbd2" strokeWidth="2" strokeDasharray="2.200 3.220" /><path d="M8.500 0v8" stroke="#4e4c45" strokeWidth="4" /><path d="M8.500 1.500v7" stroke="#dfdbd2" strokeWidth="1.800" /></Svg></Ind>
      </Indicators>
    </Panel>
  );
}

function BrowserChrome() {
  return (
    <>
      <TabStrip>
        {tabs.map((t, i) => (
          <Tab key={i} $on={t.on} $z={t.on ? 9 : 6 - i}>
            <TabShape width="205" height="28" viewBox="0 0 205 28"><path d="M0 28L1 26.500 12 1.500Q12.300.500 13.500.500H190.500Q192 .500 192.500 1.500L204 26.500 205 28Z" fill={t.on ? '#f2f1f0' : '#d0cfcd'} stroke="#f0efed" strokeWidth=".8" strokeOpacity=".6" />{!t.on && <path d="M1 27.500H204" stroke="#b4b3b1" />}</TabShape>
            {t.icon}
            <TabTitle $fade={t.fade}><Fit w={t.w}>{t.t}</Fit></TabTitle>
            {t.on && <Speaker w={12} c="#5a5a5a" dim="#5a5a5a" />}
            <CloseSlot><X s={9} /></CloseSlot>
          </Tab>
        ))}
        <NewTab><Svg w={33} h={16}><path d="M2 .5h23q2 0 2.500 1.500l5 13.500H9q-2 0-2.800-2L1 2Q.5.5 2 .5z" fill="#cfcecc" /></Svg></NewTab>
        <UserBtn>Yuqi</UserBtn>
      </TabStrip>
      <Toolbar>
        <NavBtn><Svg w={16}><path d="M15 8H2M8 1.700L1.700 8 8 14.300" stroke="#505050" strokeWidth="2" /></Svg></NavBtn>
        <NavBtn><Svg w={16}><path d="M1 8h13M8 1.700L14.300 8 8 14.300" stroke="#cbcbcb" strokeWidth="2" /></Svg></NavBtn>
        <NavBtn><Svg w={16}><path d="M13.200 4.200A6.200 6.200 0 1014.200 9" stroke="#505050" strokeWidth="2" /><path d="M15 1v6H9z" fill="#505050" /></Svg></NavBtn>
        <Omnibox>
          <Svg w={9} h={13}><path d="M2 6V3.800a2.500 2.500 0 015 0V6" stroke="#0b8043" strokeWidth="1.500" /><rect y="5" width="9" height="7.500" rx="1" fill="#0b8043" /></Svg>
          <Secure><Fit w={43}>Secure</Fit></Secure>
          <Url><Part $c="#0b8043"><Fit w={34}>https</Fit></Part><Part $c="#9b9b9b"><Fit w={13}>://</Fit></Part><Part $c="#333"><Fit w={106}>www.bilibili.com</Fit></Part><Part $c="#9b9b9b"><Fit w={158}>/video/av22307444/?p=2</Fit></Part></Url>
          <Svg w={15} h={14}><path d="M0 0h7l3 11H1.500Q0 11 0 9.500z" fill="#767676" /><path d="M8 3h6v10.500H9" stroke="#8a8a8a" /><path d="M6 4a2 2 0 10.500 2H4.500" stroke="#fff" /><path d="M9.500 6h4M11.500 6c0 2-1 3-2 4M10.500 7.500l2.500 3" stroke="#8a8a8a" /></Svg>
          <Svg w={24} h={16}><path d="M17 1.800l1.800 4.300 4.600.3-3.500 3 1.100 4.500-4-2.500-4 2.500 1.100-4.500-3.500-3 4.600-.3z" stroke="#6a6a6a" strokeWidth="1.400" /></Svg>
        </Omnibox>
        <Svg w={4} h={14}><circle cx="2" cy="2" r="1.600" fill="#505050" /><circle cx="2" cy="7" r="1.600" fill="#505050" /><circle cx="2" cy="12" r="1.600" fill="#505050" /></Svg>
      </Toolbar>
      <Bookmarks>
        {bookmarks.map(([t, w, icon]) => <Mark key={t}><MarkIcon>{icon}</MarkIcon><Fit w={w}>{t}</Fit></Mark>)}
      </Bookmarks>
    </>
  );
}

function RibbonBar() {
  return (
    <Ribbon>
      <Group $w={103} $row>
        <Big $w={33}>
          <BigIcon><Svg w={18}><path d="M1 3h12v13H1z" fill="#777783" /><path d="M4 1h6v4H4z" fill="#5b5b66" /><path d="M7 8h7l3 3v6H7z" fill="#7fa6ee" stroke="#fff" strokeWidth=".6" /></Svg></BigIcon>
          <BigLabel><Fit w={17}>粘贴</Fit><Caret /></BigLabel>
        </Big>
        <div>
          <Line><Cell $w={15}><Svg w={11}><path d="M2 0l6 8M9 0L3 8" stroke="#6b7f9c" strokeWidth="1.200" /><circle cx="2.300" cy="9" r="1.600" stroke="#3c7cd0" /><circle cx="8.700" cy="9" r="1.600" stroke="#3c7cd0" /></Svg></Cell><Fit w={17}>剪切</Fit></Line>
          <Line><Cell $w={15}><Svg w={11}><path d="M.5.5h5l2 2v6h-7z" fill="#fff" stroke="#7da0d8" /><path d="M3.500 3h5l2 2v5.500h-7z" fill="#e8effb" stroke="#5f8fd8" /></Svg></Cell><Fit w={17}>复制</Fit></Line>
        </div>
        <Big $w={34}>
          <BigIcon><Svg w={17}><path d="M11 1l4 3-3 5-4-3z" fill="#6b6b76" /><path d="M6 4l7 6-2 2-7-5z" fill="#84848f" /><path d="M4 6l6 5-4 5-5-5z" fill="#c9a6ea" /></Svg></BigIcon>
          <BigLabel><Fit w={26}>格式刷</Fit></BigLabel>
        </Big>
        <Corner />
      </Group>
      <Group $w={207}>
        <Line>
          <Combo $w={85} $ml={3}><span /><Caret /></Combo><Combo $w={44} $ml={-1}><Fit w={17}>五号</Fit><Caret /></Combo>
          <Cell $w={20}><Glyph $s={11}>A<sup>+</sup></Glyph></Cell><Cell $w={13}><Glyph $s={10}>A<sup>−</sup></Glyph></Cell><Div />
          <Cell $w={14}><Svg w={11}><path d="M0 8L3 1l3 7M1.200 5.500h3.500" stroke="#6b6b76" /><path d="M5 8l3-3 2.500 2L8 10z" stroke="#f0953e" strokeWidth="1.200" /></Svg></Cell><Div />
          <Cell $w={17}><Svg w={12}><path d="M1 2h10M3 0l1 3M9 0L8 3M6 0v4" stroke="#80808a" strokeWidth=".9" /><path d="M2 6h8M6 4.500v1.500M9 6.500L3 11.500M3 6.500l6 5" stroke="#4a86dc" /></Svg></Cell><Caret />
        </Line>
        <Line>
          <Cell $w={25}><Glyph $b>B</Glyph></Cell><Cell $w={15}><Glyph $i>I</Glyph></Cell><Cell $w={13}><Glyph $d="underline">U</Glyph></Cell><Caret $m={2} />
          <Cell $w={17}><Glyph $s={8.5} $c="#a34a45" $d="line-through">AB</Glyph></Cell><Caret $m={0} />
          <Cell $w={20}><Glyph>X<sup>2</sup></Glyph></Cell><Cell $w={19}><Glyph>X<sub>2</sub></Glyph></Cell><Cell $w={2} /><Div />
          <Cell $w={12}><Svg w={11}><path d="M1 10L5.500 1 10 10M3 7h5" stroke="#5a8de0" strokeWidth="1.600" /></Svg></Cell><Caret $m={1} />
          <Cell $w={16}><Glyph $s={8.5} $bar="#f8ec1c">ab</Glyph></Cell><Caret /><Cell $w={1} />
          <Cell $w={14} $hl><Glyph $b $s={9.5} $bar="#2b1be0">A</Glyph></Cell><Cell $w={7} $hl><Caret /></Cell>
          <Cell $w={18}><Svg w={10}><rect width="10" height="10" fill="#8e8e9a" /><path d="M2 9l3-7 3 7M3.300 6.500h3.400" stroke="#33333b" /></Svg></Cell>
        </Line>
        <Corner />
        <PointerWrap><Svg w={9} h={14}><path d="M.7.7v11l2.700-2.500 1.800 4 1.600-.8-1.800-3.800h3.500z" fill="#fff" stroke="#333" strokeWidth=".9" /></Svg></PointerWrap>
      </Group>
      <Group $w={152}>
        <Line>
          <Cell $w={20}><Numbered dots /></Cell><Caret /><Cell $w={16}><Numbered /></Cell><Caret /><Cell $w={3} /><Div />
          <Cell $w={16}><Indent out /></Cell><Cell $w={12}><Indent /></Cell><Div />
          <Cell $w={18}><Glyph $s={10}><sup>*</sup>A<sup>*</sup></Glyph></Cell><Caret /><Cell $w={5} /><Div />
          <Cell $w={15}><Svg w={9}><path d="M8 1v4H3M5.500 2.500L3 5l2.500 2.500M1 1v3" stroke="#5d5d68" /></Svg></Cell><Caret />
          <Cell $w={17}><Svg w={10}><path d="M.5 1.500h9v7h-9zM.5 5h9M3.500 1v8M6.500 1v8" stroke="#5d5d68" /></Svg></Cell>
        </Line>
        <Line>
          <Cell $w={22}><Bars rows={[[0, 9], [0, 6], [0, 9], [0, 6]]} /></Cell><Cell $w={11}><Bars rows={[[1, 8], [2, 6], [0, 10], [2, 6]]} /></Cell>
          <Cell $w={15}><Bars rows={[[0, 9], [3, 6], [0, 9], [3, 6]]} /></Cell><Cell $w={14} $hl $h={15}><Bars rows={[[0, 10], [0, 10], [0, 10], [0, 10]]} /></Cell>
          <Cell $w={15}><Svg w={10}><path d="M.5 1v8M9.500 1v8M2 3h6M2 7.500h6M4 1.500L2 3l2 1.500M6 1.500L8 3 6 4.500" stroke="#5d5d68" strokeWidth=".8" /></Svg></Cell><Div />
          <Cell $w={18}><Indent /></Cell><Caret /><Cell $w={3} /><Div />
          <Cell $w={16}><Svg w={11}><path d="M1 5l4-4 4 4-2 3H3z" fill="#5d5d68" /><path d="M0 9.800h11" stroke="#5d5d68" strokeWidth="2" /></Svg></Cell><Caret />
          <Cell $w={17}><Svg w={10}><path d="M.5.5h9v9h-9z" stroke="#5d5d68" /><path d="M5 1v8M1 5h8" stroke="#9a9aa5" strokeDasharray="1 1" /></Svg></Cell><Caret />
        </Line>
        <Corner />
      </Group>
      <Group $w={192} $row>
        <Styles>
          <StyleCell $on><Sample $s={8} $ls={-0.3}>AaBbCcDd</Sample>正文</StyleCell>
          <StyleCell><Sample $b $s={16.5} $ls={-0.3}>AaBb</Sample>标题 1</StyleCell>
          <StyleCell><Sample $b $s={13.5}>AaBb(</Sample>标题 2</StyleCell>
          <StyleScroll><Caret $c="#aaa" /><Caret /><Caret /></StyleScroll>
        </Styles>
        <Big $w={44}>
          <BigIcon><Svg w={18}><path d="M6 0v12M0 6h12M1.800 1.800l8.400 8.400M10.200 1.800L1.800 10.200" stroke="#f6b12c" strokeWidth="1.500" /><circle cx="6" cy="6" r="2.300" fill="#fff3c0" /><path d="M8 16l4.500-12L17 16M10 12h5" stroke="#55555f" strokeWidth="1.700" /></Svg></BigIcon>
          <BigLabel><Fit w={25}>新样式</Fit><Caret /></BigLabel>
        </Big>
        <Corner />
      </Group>
      <Group $w={55} $row>
        <Big $w={54}><BigIcon><Svg w={18}><path d="M1 4h11M6.500 1v3M10.500 4c-1 4-5 7-9 8M3 4c1 4 4 7 7 8" stroke="#55555f" strokeWidth="1.200" /><path d="M9 16l4-4" stroke="#8aa0e0" strokeWidth="2.500" /><path d="M12 9.500a3 3 0 104 4" stroke="#8aa0e0" strokeWidth="2" /></Svg></BigIcon><BigLabel><Fit w={34}>文字工具</Fit><Caret /></BigLabel></Big>
      </Group>
      <Group $w={86} $row>
        <Big $w={54}><BigIcon><Svg w={18}><circle cx="8.500" cy="8" r="7.300" stroke="#3c84dc" strokeWidth="1.300" fill="#fff" /><path d="M13.500 13.500l3.500 3.500" stroke="#3c84dc" strokeWidth="2.500" /><circle cx="5.500" cy="6.500" r="1.400" stroke="#e08a4a" strokeWidth="1.200" /><path d="M8.800 4v3.800h2V5.800h-2" stroke="#e08a4a" strokeWidth="1.200" /><path d="M4.500 10.500h3M8.500 10.500h4" stroke="#5a8de0" strokeWidth="1.800" /></Svg></BigIcon><BigLabel><Fit w={34}>查找替换</Fit><Caret /></BigLabel></Big>
        <Big $w={24}><BigIcon><Svg w={12} h={17}><path d="M1 1v13l3-3 2.500 5 2.500-1.200L6.700 10H11z" fill="#f7a456" /></Svg></BigIcon><BigLabel><Fit w={17}>选择</Fit><Caret /></BigLabel></Big>
      </Group>
    </Ribbon>
  );
}

function WpsWindow() {
  return (
    <Wps>
      <TitleBar>
        <Brand><WLogo /><Fit w={43}>WPS 文字</Fit><Caret $c="#fff" $m={5} /></Brand>
        <DocName><Svg w={10}><path d="M2 1h3v4H2zM5 0h4v9H5z" fill="#666672" /><rect y="5" width="5" height="5" fill="#4b8bea" /></Svg><Fit w={87}>笔记.docx - WPS 文字</Fit></DocName>
        <Login><Fit w={25}>未登录</Fit></Login>
        <WinCtl $w={17}><Svg w={9}><path d="M2.500 0h4L9 2 8 4 7 3.500V9H2V3.500L1 4 0 2z" fill="#5c5c66" /></Svg></WinCtl>
        <WinCtl $w={18}>?<Caret /></WinCtl><Div />
        <WinCtl $w={23}><Svg w={11} h={10}><path d="M.5.5h10v9H.5zM.5 2.500h10M5.500 9V4M3.500 6l2-2 2 2" stroke="#5c5c66" /></Svg></WinCtl><Div />
        <WinCtl $w={23}><Svg w={9}><path d="M0 5h9" stroke="#5c5c66" strokeWidth="1.500" /></Svg></WinCtl>
        <WinCtl $w={15}><Svg w={9} h={8}><path d="M.7.7h7.600v6H.7z" stroke="#5c5c66" strokeWidth="1.500" /></Svg></WinCtl>
        <WinCtl $w={28}><X s={8} c="#5c5c66" /></WinCtl>
      </TitleBar>
      <MenuBar>{menus.map(([m, w], i) => <Menu key={m} $w={w} $on={!i}>{m}</Menu>)}</MenuBar>
      <RibbonBar />
      <DocTabs>
        <Quick $w={16}><Svg w={10}><path d="M0 1.500h3l1 1h4V4H3L1 8.500H0z" fill="#f08a2c" /><path d="M3 4.500h7L8 9H1z" fill="#f7a34c" /></Svg></Quick>
        <Quick $w={16}><Svg w={10}><path d="M.6.6h8.800v8.800H.6z" fill="#d5e2fa" stroke="#4f86dc" strokeWidth="1.200" /><path d="M2.500 1v2.500h5V1M2.500 9V6h5v3" stroke="#4f86dc" /></Svg></Quick>
        <Quick $w={15}><Svg w={11}><path d="M2.500.5h5l3 3v7h-8z" fill="#fff" stroke="#d0685c" /><path d="M4 8.500c2-1 3-3 2.500-5C6 5 7.500 7.500 9 7.500c-2-.5-3.500 0-5 1z" stroke="#d0453a" strokeWidth=".9" /></Svg></Quick>
        <Quick $w={15}><FileGlyph c="#7488d8" /></Quick>
        <Quick $w={16}><Svg w={11}><path d="M1.500.5h5l3 3v7h-8z" fill="#fff" stroke="#777" /><circle cx="6.500" cy="6.500" r="2" fill="#e7f3e9" stroke="#4c8a5c" /><path d="M8 8l2.500 2.500" stroke="#4c8a5c" strokeWidth="1.300" /></Svg></Quick>
        <Quick $w={15}><Svg w={10}><path d="M1 1v4h4M1.500 4.500C4 1 9 2 8.500 5.500 8.200 7.500 7 8.500 5.500 9" stroke="#4b4b55" strokeWidth="1.600" /></Svg></Quick>
        <Quick $w={16}><Svg w={10}><path d="M9 1v4H5M8.500 4.500C6 1 1 2 1.500 5.500 1.800 7.500 3 8.500 4.500 9" stroke="#a2a2ac" strokeWidth="1.600" /></Svg></Quick>
        <Quick $w={21}><Svg w={9} h={8}><path d="M0 3h6L3 6.500z" fill="#555" /><circle cx="7" cy="1.700" r="1.500" fill="#e02a20" /></Svg></Quick>
        <DocTab $w={71}><Svg w={12} h={10}><path d="M1 1l2.500 7.500L6 2l2.500 6.500L11 1M6 1h4" stroke="#e5473c" strokeWidth="1.700" /></Svg><Fit w={36}>我的WPS</Fit><Push><X s={6} c="#666" t={1.1} /></Push></DocTab>
        <DocTab $w={139} $on><Svg w={11}><path d="M3 .5h7v9H3z" fill="#fff" stroke="#6b7ca8" /><rect y="2" width="6" height="6" fill="#4a62a8" /><path d="M1.500 3.500L2.500 7 3 5l.5 2 1-3.500" stroke="#fff" strokeWidth=".6" /></Svg><Fit w={39}>笔记.docx</Fit><Push><X s={6} c="#666" t={1.1} /></Push></DocTab>
        <Quick $w={19}><Svg w={9}><path d="M4.500 0v9M0 4.500h9" stroke="#5f5f6a" strokeWidth="1.200" /></Svg></Quick>
        <Push>
          <Quick $w={16}><Svg w={7}><rect width="7" height="7" fill="#555563" /><path d="M3 1v3h2" stroke="#fff" strokeWidth=".8" /></Svg></Quick>
          <Quick $w={17}><Svg w={7}><path d="M0 0h4l3 3v4H0z" fill="#666674" /><path d="M2 2l2 3 2-1" stroke="#fff" strokeWidth=".7" /></Svg></Quick>
          <Quick $w={18}><Svg w={9} h={8}><path d="M0 0h6v3h3L6 7 4 5H0z" fill="#666674" /></Svg></Quick><Div /><Cell $w={1} />
          <Quick $w={14}><Svg w={8} h={10}><circle cx="4" cy="3.600" r="3.600" fill="#f9a44e" /><path d="M2.500 7.500h3v2h-3z" fill="#8c8c94" /></Svg></Quick>
          <Fit w={76}>点此查找命令及功能</Fit><Cell $w={26} />
        </Push>
      </DocTabs>
      <Work>
        <Outline>
          <OutlineHead><HeadTab $on><Fit w={42}>文档结构图</Fit></HeadTab><HeadSep /><HeadTab><Fit w={17}>书签</Fit></HeadTab><HeadClose><X s={7} c="#77778a" t={0.9} /></HeadClose></OutlineHead>
          <Tree>{tree.map(([ml, pl, t, w, mr, on]) => <TreeRow key={t} $ml={ml} $pl={pl} $on={on}>{mr ? <Twist $mr={mr} /> : null}<Fit w={w}>{t}</Fit></TreeRow>)}</Tree>
          <OutlineFoot><Select><Fit w={33}>显示级别</Fit><Caret /></Select><Select><span /><Fit w={23}>100%</Fit><Caret /></Select></OutlineFoot>
        </Outline>
        <Doc>
          <Sheet $h={99} $pt={6}><Marks><Crop $v="top" $h="right" /><Crop $v="top" $h="left" /></Marks></Sheet>
          <Gap />
          <Sheet $h={256} $pt={71}>
            <Marks><Crop $v="bottom" $h="right" /><Crop $v="bottom" $h="left" /></Marks>
            <Prose>
              <ProseLine $w={541}><Fit w={272}>可以在所有的操作系统上面运行 java 程序了。</Fit></ProseLine>
              <ProseLine /><ProseLine />
              <ProseLine $w={541} $sel><Fit w={541}>Java 通过不同的系统、不同版本、不同位数的 java 虚拟机(jvm),来屏蔽不同的系统指令集差</Fit></ProseLine>
              <ProseLine $w={541} $sel><Fit w={541}>异而对外体统统一的接口(java API),对于我们普通的 java 开发者而言，只需要按照接口开发</Fit></ProseLine>
              <ProseLine $w={549} $sel><PasteHint><Svg w={9} h={10}><path d="M.5.5h5l3 3v6h-8z" fill="#d7e2f8" stroke="#8fa9de" /><path d="M2 4h4M2 6h5M2 8h5" stroke="#8fa9de" /></Svg><Caret $c="#aaa" /></PasteHint><Fit w={548}>即可。如果我系统需要部署到不同的环境时，只需在系统上面按照对应版本的虚拟机即可。</Fit></ProseLine>
            </Prose>
          </Sheet>
          <HScroll><Svg w={5} h={7}><path d="M4.500 0v7L.5 3.500z" fill="#fff" /></Svg><HThumb><i /><i /><i /></HThumb><Svg w={5} h={7}><path d="M.5 0v7l4-3.500z" fill="#fff" /></Svg></HScroll>
        </Doc>
        <VScroll>
          <Svg w={9}><rect width="9" height="9" fill="#8a8a9c" /><path d="M2 2h3v3H2zM4 5h3v2H4z" stroke="#fff" strokeWidth=".8" /></Svg>
          <Svg w={6} h={14} vb="0 0 6 14"><path d="M3 7l3 4H0z" fill="#fff" /></Svg>
          <VThumb><i /><i /><i /></VThumb>
          <VEnd><Svg w={6} h={4}><path d="M0 0h6L3 4z" fill="#fff" /></Svg><Svg w={6}><path d="M3 0l3 3H0zM3 3l3 3H0z" fill="#fff" /></Svg><Svg w={6}><circle cx="3" cy="3" r="2" stroke="#fff" /></Svg><Svg w={6}><path d="M0 0h6L3 3zM0 3h6L3 6z" fill="#fff" /></Svg></VEnd>
        </VScroll>
        <Edge><EdgeTab><Svg w={4} h={5}><path d="M3.500 0v5L.5 2.500z" fill="#fff" /></Svg></EdgeTab></Edge>
      </Work>
      <Status>
        <Stat $w={33}><Fit w={27}>页码: 2</Fit></Stat><Stat $w={42}><Fit w={35}>页面: 2/2</Fit></Stat><Stat $w={29} $sep><Fit w={27}>节: 1/1</Fit></Stat>
        <Stat $w={26}><Fit w={22}>&nbsp;行: 6</Fit></Stat><Stat $w={27} $sep><Fit w={23}>列: 42</Fit></Stat><Stat $w={62} $sep><Fit w={60}>&nbsp; 字数: 112/820</Fit></Stat>
        <Stat $w={46} $sep><Svg w={9} h={5}><rect x="2" width="5" height="5" fill="#28a03a" /></Svg><Fit w={35}>拼写检查</Fit></Stat>
        <Push>
          <Stat $w={20} $c><Svg w={10}><circle cx="5.500" cy="5" r="4" stroke="#5d5d68" /><path d="M5.500 2.500V5H8M0 4l1.500 2L3 4" stroke="#5d5d68" /></Svg></Stat>
          <Stat $w={19} $c><Svg w={10}><path d="M.5 3V.5H3M7 .5h2.500V3M9.500 7v2.500H7M3 9.500H.5V7" stroke="#5d5d68" /><rect x="2.500" y="2.500" width="5" height="5" fill="#5d5d68" /></Svg></Stat>
          <Stat $w={17} $c $hl><Sheet4 /></Stat><Stat $w={20} $c><Sheet4 d="M3 2v6M4.500 3h4M4.500 5h4" /></Stat>
          <Stat $w={17} $c><Sheet4 d="M5 7h5M7 5v4" /></Stat><Stat $w={17} $c><Sheet4 d="M5 2v4M4 5l1 2 1-2" /></Stat>
          <Stat $w={14}><Caret /></Stat><Stat $w={27}><Fit w={26}>140 %</Fit></Stat>
          <Stat $w={14} $c><Svg w={7}><path d="M0 3.500h7" stroke="#5d5d68" /></Svg></Stat><Stat $w={11}><Svg w={10} h={3}><path d="M0 1.500h10" stroke="#3c7cd8" strokeWidth="1.400" /></Svg></Stat><Cell $w={120} />
        </Push>
        <Ime>
          <SogouTile $s={16} $ml={-7}>S</SogouTile>
          <ImeSlot $w={21}>中</ImeSlot>
          <ImeSlot $w={12}><Svg w={10}><path d="M6 0a5 5 0 11-6 7C4 8 7 5 6 0z" fill="#1168c4" /></Svg></ImeSlot>
          <ImeSlot $w={15}><Svg w={9}><circle cx="2" cy="2.500" r="1.400" stroke="#1168c4" /><path d="M6 4h2.500L7 9H6z" fill="#1168c4" /></Svg></ImeSlot>
          <ImeSlot $w={17}><Svg w={12} h={9}><rect x=".6" y=".6" width="10.800" height="7.800" rx="1" stroke="#1168c4" strokeWidth="1.200" /><path d="M2 3h8M2 4.800h8M3.500 6.600h5" stroke="#1168c4" strokeDasharray="1.300 .6" /></Svg></ImeSlot>
          <ImeSlot $w={17}><Svg w={11}><circle cx="4" cy="2" r="2" fill="#a9b6cc" /><path d="M1 10c0-7 6-7 6 0z" fill="#a9b6cc" /><rect x="6" y="6" width="5" height="4" fill="#c5cedc" /></Svg></ImeSlot>
          <ImeSlot $w={12}><Svg w={10}><path d="M3 0h4l3 2.500-1 2L8 4v6H2V4l-1 .5-1-2z" fill="#1168c4" /></Svg></ImeSlot>
          <ImeSlot $w={16}><Svg w={11}><path d="M1 10l5-5" stroke="#1168c4" strokeWidth="2" /><path d="M7 .8a2.800 2.800 0 103.200 3.200L8 4.500 6.500 3z" fill="#1168c4" /></Svg></ImeSlot>
        </Ime>
      </Status>
    </Wps>
  );
}

function WindowsTaskbar() {
  return (
    <Taskbar>
      <Slot $w={36}><Win /></Slot><Slot $w={14}><Grip /></Slot>
      <Slot $w={41}><Svg w={22}><path d="M10 8c-6-3-10 0-9 5 3-2 8 0 9-5z" fill="#8ae040" /><path d="M10 8C8-1 20 0 20 3c0 3-4 4-10 5z" fill="#f2fbe8" /><path d="M11 9c6-4 10-2 10 4-1 9-14 10-15 4 0-4 2-6 5-8z" fill="#3fbf25" /><path d="M8 16l12-6" stroke="#c7f09b" strokeWidth="2" /></Svg></Slot>
      <Slot $w={37}><ChromeIcon s={20} /></Slot>
      <Task><Svg w={22}><rect width="22" height="22" fill="#3a2a4c" /><circle cx="11" cy="11" r="8" stroke="#e8e8e8" strokeWidth="3" strokeDasharray="3 1.200" /><circle cx="11" cy="11" r="6.500" fill="#1d1725" /><path d="M1 8h20M3 11.500h16M7 15h8" stroke="#e4702c" strokeWidth="2.200" strokeDasharray="3 .8" /></Svg><Fit w={24}>Java...</Fit></Task>
      <Task $mr={0}><YellowFolder /><Cell $w={1} /><Fit w={17}>面试</Fit></Task>
      <Task><YellowFolder /><Cell $w={1} /><Fit w={23}>面试...</Fit></Task>
      <Task><Svg w={21}><path d="M1 4l16-3 3 15-16 3z" fill="#a8b864" /><path d="M2 7c7-3 9 6 17 3M3 11c7-3 9 6 16 3" stroke="#e4ebc0" strokeWidth="1.400" /></Svg><Fit w={24}>Cam...</Fit></Task>
      <Task $on><Svg w={22}><rect width="22" height="22" rx="4" fill="#1591f5" /><path d="M5.500 7v8l5.500-4.500 3.500 4L16.500 13V7" stroke="#fff" strokeWidth="1.700" /></Svg><Fit w={25}>笔记....</Fit></Task>
      <Task><Svg w={21}><path d="M1 2h16v18H1z" fill="#eef3ea" /><path d="M1 12h16v8H1z" fill="#4fae32" /><path d="M4 6v6M7 6v4M10 8v2M13 8v2" stroke="#3a4a3a" /><path d="M20 1l-8 12" stroke="#e3a33a" strokeWidth="2.500" /></Svg><Fit w={24}>C:\U...</Fit></Task>
      <Task><Svg w={21}><path d="M10 3c8-2 11 5 8 10-2 3-5 0-6 3-1 4-11 2-11-4 0-5 4-8 9-9z" fill="#e4eaf2" /><circle cx="6" cy="10" r="1.700" fill="#2f9b4a" /><circle cx="10" cy="6.500" r="1.700" fill="#de4b3a" /><circle cx="15" cy="7" r="1.700" fill="#3f7fd8" /><circle cx="6" cy="14" r="1.500" fill="#444" /><path d="M19 1l-7 18" stroke="#e08c48" strokeWidth="2.400" /></Svg><Fit w={23}>无标...</Fit></Task>
      <Slot $w={14}><Grip /></Slot>
      <Slot $w={16}><SogouTile $s={10}>S</SogouTile></Slot>
      <Slot $w={16}><Svg w={11}><circle cx="5.500" cy="5.500" r="5" fill="#2a22a0" stroke="#c9c9f0" /><path d="M4 4c0-2 3-2 3 0 0 1-1.500 1-1.500 2.500M5.500 7.500v1" stroke="#fff" strokeWidth="1.200" /></Svg></Slot>
      <Slot $w={14}><Svg w={6} h={14}><path d="M.5 2.500h3v2h-3zM2 .5h3v2" stroke="#dfe8f3" /><path d="M1 9h4L3 11.500z" fill="#fff" /></Svg></Slot>
      <Slot $w={26}><Svg w={15} h={12}><path d="M11 4l2-2M9 2V0M13 6h2" stroke="#d8e6f4" /><circle cx="9" cy="5" r="2.500" fill="#d7e4f0" /><path d="M3 11a2.700 2.700 0 010-5.400A4 4 0 0110.500 6 2.500 2.500 0 0111 11z" fill="#fff" /></Svg></Slot>
      <Slot $w={21} $start><Fit w={19}>27℃</Fit></Slot>
      <Slot $w={18}><Svg w={10}><path d="M0 3h3l4-3v10L3 7H0z" fill="#ef6a45" /><path d="M8.500 2v6" stroke="#93b7dc" /></Svg></Slot>
      <Slot $w={18}><Fit w={10}>HP</Fit></Slot>
      <Slot $w={16}><Svg w={11}><path d="M1 1h4v3L3 10H2V4z" fill="#c8b9b0" /><rect x="5" y="2" width="5" height="5" fill="#e0251c" /></Svg></Slot>
      <Slot $w={17}><Svg w={12}><circle cx="7" cy="5" r="4" fill="#f4ca28" /><circle cx="4" cy="7" r="3" fill="#68b5ea" /><path d="M6 8h5v3H6z" fill="#3c86d0" /></Svg></Slot>
      <Slot $w={16}><Svg w={8} h={11}><rect x="1" width="6" height="11" rx="1" fill="#2c98e0" /><path d="M4 3v5M2.500 4.500h3" stroke="#fff" /></Svg></Slot>
      <Slot $w={18}><Svg w={11}><rect width="11" height="8" fill="#9a9a9e" /><path d="M1 10h3M7 10h3" stroke="#777" strokeWidth="1.500" /></Svg></Slot>
      <Slot $w={16}><Svg w={11}><circle cx="5.500" cy="5.500" r="5.200" fill="#dd2a24" /><path d="M2 5.500h7" stroke="#fff" strokeWidth="2.200" /></Svg></Slot>
      <Slot $w={17}><Svg w={11}><rect width="11" height="11" rx="1" fill="#2062d4" /><path d="M1.500 2.500h2M1.500 5.500h2M1.500 8.500h2M5 2.500h5M5 5.500h5M5 8.500h5" stroke="#fff" strokeWidth="1.200" /></Svg></Slot>
      <Slot $w={17}><Svg w={12} h={11}><rect width="9" height="9" fill="#2a86e0" /><path d="M1 5l2 1 2-4 2 3" stroke="#fff" /><rect x="6" y="5" width="6" height="6" fill="#f0a24a" /></Svg></Slot>
      <Slot $w={17}><Svg w={12} h={11}><path d="M1 1h7v4H1zM2 5v5" stroke="#c8d4e2" /><path d="M8 3l4 7.500H4z" fill="#f6cf2d" /><path d="M8 5.500v3" stroke="#333" /></Svg></Slot>
      <Slot $w={17}><Svg w={11} h={12}><rect x="1" width="4" height="9" rx="1" fill="#8f9499" /><circle cx="7" cy="8" r="4" fill="#2fae3e" /><path d="M5 8l1.500 1.500L9 6.500" stroke="#fff" /></Svg></Slot>
      <Slot $w={5} />
      <Clock><Fit w={50}>10:40 星期三</Fit><Fit w={37}>2016/5/4</Fit></Clock>
      <Calendar><Fit w={25}>儿童节</Fit><CalDay>28</CalDay></Calendar>
      <ShowDesk />
    </Taskbar>
  );
}

function PlayerBlock() {
  const g = '#99a2aa';
  return (
    <Player>
      <Video><Screen><Upper><DeskLeft /><WpsWindow /><DeskRight /></Upper><WindowsTaskbar /></Screen></Video>
      <Controls>
        <CtlSlot $w={38}><Svg w={16}><rect x="1" y="0" width="5" height="16" rx="2" fill={g} /><rect x="10" y="0" width="5" height="16" rx="2" fill={g} /></Svg></CtlSlot>
        <CtlSlot $w={33}><Svg w={20} h={16}><path d="M1 1.500Q1-.5 3 .7L12.500 7q1.200 1 0 2L3 15.300q-2 1.200-2-.8z" fill={g} /><rect x="14" y="0" width="5" height="16" rx="2" fill={g} /></Svg></CtlSlot>
        <Bar><Played /><Knob /></Bar>
        <CtlSlot $w={86}><Fit w={74}>10:03 / 10:39</Fit></CtlSlot>
        <CtlSlot $w={36}><Svg w={16} h={14}><path d="M0 4.500A1 1 0 011 3.500h2L7.500.5v13L3 10.500H1a1 1 0 01-1-1z" fill={g} /><path d="M9 1a6 6 0 010 12z" fill={g} /><path d="M11.300 3.500a4.500 4.500 0 010 7" stroke="#fff" strokeWidth="1" /></Svg></CtlSlot>
        <CtlSlot $w={50}><Fit w={28}>720P</Fit></CtlSlot>
        <CtlSlot $w={28}><Svg w={14} h={14}><path d="M1.500 1h11A1.500 1.500 0 0114 2.500v7a1.500 1.500 0 01-1.500 1.500H5.500L3 13.500V11H1.500A1.500 1.500 0 010 9.500v-7A1.500 1.500 0 011.500 1z" fill={g} /></Svg></CtlSlot>
        <CtlSlot $w={30}><Svg w={17} h={14}><path d="M2 7.500V5.500A2.500 2.500 0 014.500 3H12M15 6.500v2a2.500 2.500 0 01-2.500 2.500H6" stroke={g} strokeWidth="2.400" /><path d="M10.500 0l4.500 3-4.500 3zM7 8l-4.500 3L7 14z" fill={g} /><path d="M3.200.5l13 12" stroke="#fff" strokeWidth="1.600" /><path d="M2 .5l13 12.500" stroke={g} strokeWidth="1.600" /></Svg></CtlSlot>
        <CtlSlot $w={30}><Svg w={17} h={15}><path d="M5 1l2 2.500M12 1l-2 2.500" stroke={g} strokeWidth="2" strokeLinecap="round" /><rect x="1" y="4" width="15" height="9.800" rx="3" stroke={g} strokeWidth="2" /><path d="M5.500 7v2.500M11.500 7v2.500" stroke={g} strokeWidth="1.600" /><path d="M7.500 10.500h2" stroke={g} /></Svg></CtlSlot>
        <CtlSlot $w={18}><Svg w={17} h={16}><circle cx="8.500" cy="7.500" r="1.300" fill={g} /><path d="M4 .5A8 8 0 000 6.500h5.500L6 5zM13 .5a8 8 0 014 6h-5.500L11 5zM8.500 10L5 15c2 1.300 5 1.300 7 0z" fill={g} /></Svg></CtlSlot>
      </Controls>
      <SendRow>
        <SendTools>
          <Svg w={14} h={13}><path d="M1.500 0h11A1.500 1.500 0 0114 1.500v8a1.500 1.500 0 01-1.500 1.500H6l-1.500 2L3 11H1.500A1.500 1.500 0 010 9.500v-8A1.500 1.500 0 011.500 0z" fill="#999" /><path d="M3.500 3.500h7M3.500 6h7" stroke="#fff" /></Svg>
          <Svg w={14} h={13}><rect x="1" y="1" width="12" height="11" rx="1" stroke="#999" strokeWidth="2" /><path d="M7 8h4.500L9.200 10.500z" fill="#999" /></Svg>
        </SendTools>
        <SendInput><Fit w={163}>您可以在这里输入弹幕吐槽哦~</Fit><Etiquette><Fit w={58}>弹幕礼仪 &gt;</Fit></Etiquette><Send><Fit w={34}>发送 &gt;</Fit></Send></SendInput>
      </SendRow>
    </Player>
  );
}

export default function App() {
  return (
    <Desktop>
      <Global />
      <TopPanel />
      <Body>
        <Launcher>
          {launcher.map((l, i) => <Tile key={i} $bg={l.bg}>{l.left && <Pip />}{l.right && <Pip $right />}{l.el}</Tile>)}
          <Tile $last><Trash /></Tile>
        </Launcher>
        <Browser>
          <BrowserChrome />
          <Viewport>
            <Page>
              <Column>
                <PlayerBlock />
                <Card>
                  {[24, 24, 22, 23].map((m, i) => <Ring key={i} $d={24} $c="#5a6066" $mr={m} />)}
                  <Ring $d={24} $c="#5a6066" $mr={0} /><Spark /><Ring $d={26} $c="#f58a2c" $mr={0} />
                </Card>
              </Column>
              <Side>
                <SideBtn $h={50}><Svg w={18} h={11}><path d="M1.500 9.500L9 2.500l7.500 7" stroke="#99a2aa" strokeWidth="3" strokeLinecap="round" strokeLinejoin="round" /></Svg></SideBtn>
                <SideBtn $h={42}><Fit w={22}>mini</Fit><Fit w={24}>OFF</Fit></SideBtn>
              </Side>
            </Page>
            <ScrollTrack>
              <Svg w={7} h={4}><path d="M3.500 0L7 4H0z" fill="#505050" /></Svg>
              <Thumb />
              <Svg w={7} h={4}><path d="M0 0h7L3.500 4z" fill="#505050" /></Svg>
            </ScrollTrack>
          </Viewport>
        </Browser>
      </Body>
    </Desktop>
  );
}
